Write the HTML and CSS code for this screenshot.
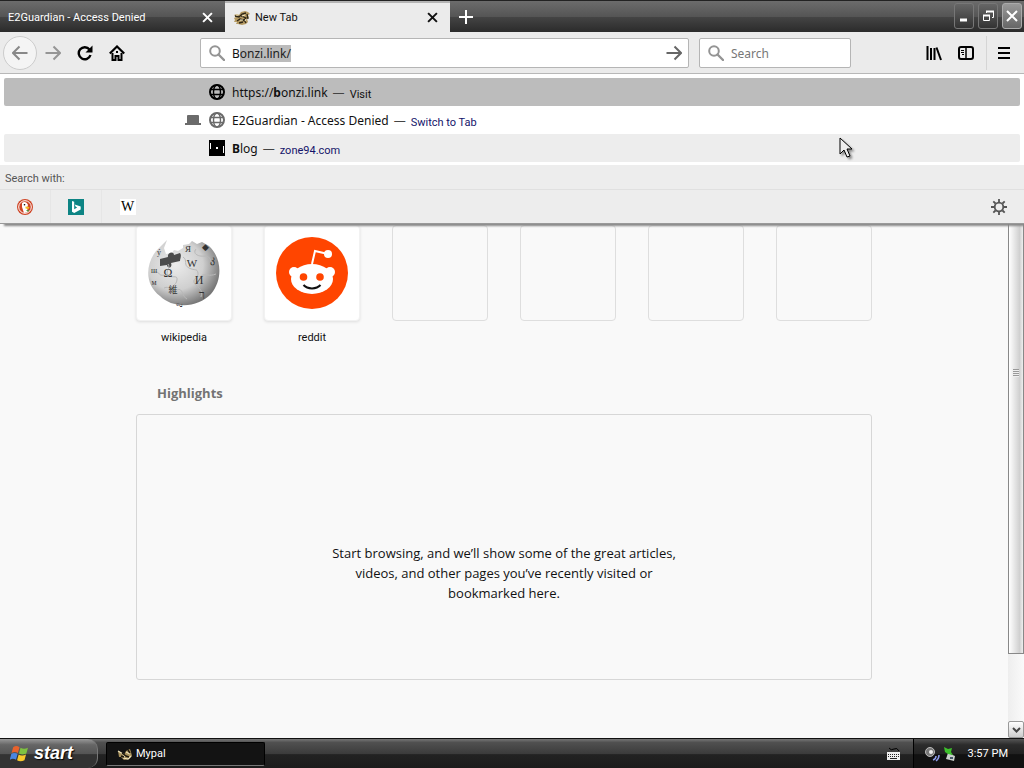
FILE: index.html
```html
<!DOCTYPE html>
<html lang="en">
<head>
    <meta charset="UTF-8">
    <meta name="viewport" content="width=device-width, initial-scale=1.0">
    <title>New Tab</title>
    <link rel="stylesheet" href="styles.css">
</head>
<body>
    <svg class="defs" aria-hidden="true">
        <symbol id="lens" viewBox="0 0 16 16">
            <circle cx="6" cy="6" r="4.8" fill="none" stroke="currentColor" stroke-width="2"/>
            <path d="M9.5 9.5 15 15" stroke="currentColor" stroke-width="2.4" stroke-linecap="round"/>
        </symbol>
        <symbol id="globe" viewBox="0 0 16 16">
            <g fill="none" stroke="currentColor">
                <circle cx="8" cy="8" r="7" stroke-width="2"/>
                <ellipse cx="8" cy="8" rx="3.5" ry="7" stroke-width="1.4"/>
                <path d="M2 5.500h12M2 10.500h12" stroke-width="1.4"/>
            </g>
        </symbol>
        <symbol id="arrow" viewBox="0 0 16 16">
            <path d="M0.500 8h14M8.500 1.500 15 8l-6.500 6.500" fill="none" stroke="currentColor" stroke-width="2"/>
        </symbol>
        <symbol id="cross" viewBox="0 0 10 10">
            <path d="M1 1l8 8M9 1 1 9" stroke="currentColor" stroke-width="1.8"/>
        </symbol>
        <symbol id="dragon" viewBox="0 0 16 14">
            <path d="M0 4l3-1 2 1 2-3 4-1 3 1 2 2-2 1 1 3-2 1 1 3-2 2-4 1-4-1-2 0 1-2-3 0 1-2-1-2 2-1z" fill="#b59a62"/>
            <path d="M1 5l4 1 3-3 4-1M3 10l3-2 4 1 2 3M7 5l5 2-3 3M5 12l4-1M13 3l1 5" fill="none" stroke="#2e2718" stroke-width="1.300"/>
            <path d="M8 5l3-1M6 9l3 0M2 4l2 0M11 10l1-2" stroke="#f3e9c4"/>
        </symbol>
        <symbol id="dragon-small" viewBox="0 0 16 14">
            <path d="M1 4l4 2 2 2 2-4 4-2 1 3 1 4-3 3-5 1-3-3-2 0z" fill="#a8915c"/>
            <path d="M1 4l5 3 2 3M9 5l4 2M6 11l5 1 3-3" fill="none" stroke="#efe3bb" stroke-width="1.200"/>
            <path d="M5 6l4 3 3 1M11 3l2 3M4 9l3 1" fill="none" stroke="#1c170d" stroke-width="1.400"/>
        </symbol>
    </svg>

    <header class="tabbar">
        <div class="tab">
            <span class="tab-title">E2Guardian - Access Denied</span>
            <button class="tab-close" aria-label="Close tab"><svg><use href="#cross"/></svg></button>
        </div>
        <div class="tab active">
            <svg class="tab-icon"><use href="#dragon"/></svg>
            <span class="tab-title">New Tab</span>
            <button class="tab-close" aria-label="Close tab"><svg><use href="#cross"/></svg></button>
        </div>
        <button class="new-tab" aria-label="New tab"><svg viewBox="0 0 14 14"><path d="M7 0v14M0 7h14" stroke="#fff" stroke-width="2"/></svg></button>
        <div class="window-buttons">
            <button aria-label="Minimize"><svg viewBox="0 0 12 12"><path d="M2 10h7" stroke="#fff" stroke-width="3"/></svg></button>
            <button aria-label="Restore"><svg viewBox="0 0 12 12"><path d="M4.500 3V1.500h7v6H10" fill="none" stroke="#fff"/><path d="M4 1.500h8" stroke="#fff" stroke-width="2"/><path d="M1.500 5.500h6v5h-6z" fill="none" stroke="#fff"/><path d="M1 5.500h7" stroke="#fff" stroke-width="2"/></svg></button>
            <button class="close" aria-label="Close"><svg viewBox="0 0 12 12"><path d="M1 1l10 10M11 1 1 11" stroke="#fff" stroke-width="2"/></svg></button>
        </div>
    </header>

    <nav class="toolbar">
        <div class="nav-buttons">
            <button class="back" aria-label="Back"><svg class="flip"><use href="#arrow"/></svg></button>
            <button class="forward" aria-label="Forward"><svg><use href="#arrow"/></svg></button>
            <button aria-label="Reload"><svg viewBox="0 0 16 16"><path d="M12.500 4.500A6 6 0 1 0 13.500 10" fill="none" stroke="#000" stroke-width="2.400"/><path d="M15.500 0.500v7h-7z"/></svg></button>
            <button aria-label="Home"><svg viewBox="0 0 16 16"><path d="M0.800 8.500 8 1.500l7.200 7" fill="none" stroke="#000" stroke-width="2.200"/><path d="M3.500 8v7h3v-4h3v4h3V8" fill="none" stroke="#000" stroke-width="2"/><path d="M7 6h2v2H7z"/></svg></button>
        </div>
        <label class="field url-field">
            <svg class="lens"><use href="#lens"/></svg>
            <input type="text" id="url" value="Bonzi.link/" aria-label="Address" spellcheck="false">
            <button class="go" aria-label="Go"><svg><use href="#arrow"/></svg></button>
        </label>
        <label class="field search-field">
            <svg class="lens"><use href="#lens"/></svg>
            <input type="text" placeholder="Search" aria-label="Search">
        </label>
        <div class="tool-buttons">
            <button aria-label="Library"><svg viewBox="0 0 16 16"><path d="M1.500 1v14M5 3v12M8.500 3v12" stroke="#000" stroke-width="2"/><path d="M10.500 2.500 15 15" stroke="#000" stroke-width="2"/></svg></button>
            <button aria-label="Sidebars"><svg viewBox="0 0 16 16"><rect x="1" y="2" width="14" height="12" rx="2" fill="none" stroke="#000" stroke-width="2"/><path d="M8 2v12" stroke="#000" stroke-width="1.500"/><path d="M3 5.500h3M3 7.500h3M4 9.500h2" stroke="#000"/></svg></button>
            <button class="menu" aria-label="Menu"><svg viewBox="0 0 16 16"><path d="M2 3h12M2 8h12M2 13h12" stroke="#000" stroke-width="2"/></svg></button>
        </div>
    </nav>

    <main class="content">
        <div class="popup">
            <ul class="results">
                <li class="selected">
                    <span class="device"></span>
                    <svg class="icon black"><use href="#globe"/></svg>
                    <span class="result-title">https://<b>b</b>onzi.link</span>
                    <span class="dash">—</span>
                    <span class="action">Visit</span>
                </li>
                <li>
                    <svg class="device" viewBox="0 0 16 16"><path d="M2 4q0-1 1-1h10q1 0 1 1v7H2zM0 11h16v2H0z" fill="#6b6b6b"/></svg>
                    <svg class="icon gray"><use href="#globe"/></svg>
                    <span class="result-title">E2Guardian - Access Denied</span>
                    <span class="dash">—</span>
                    <span class="action link">Switch to Tab</span>
                </li>
                <li class="alt">
                    <span class="device"></span>
                    <svg class="icon" viewBox="0 0 16 16"><path d="M0 0h16v16H0z"/><path d="M1.500 3v6M14.500 6v7" stroke="#fff"/><path d="M7 8h2" stroke="#fff" stroke-width="2"/></svg>
                    <span class="result-title"><b>B</b>log</span>
                    <span class="dash">—</span>
                    <span class="action link">zone94.com</span>
                </li>
            </ul>
            <div class="search-with">Search with:</div>
            <div class="engines">
                <button aria-label="DuckDuckGo"><svg viewBox="0 0 16 16"><circle cx="8" cy="8" r="8" fill="#cf4526"/><circle cx="8" cy="8" r="6.300" fill="none" stroke="#fff"/><path d="M5 4c2-2 5-1 6 2l-1 3 1 4-4 1-2-6z" fill="#fff"/><path d="M8.500 7.500l4 .5-1 2-3-.5z" fill="#f5bb24"/><path d="M9 11l3 0-1 2z" fill="#4a9b3c"/><circle cx="7.500" cy="5.800" r="0.800"/></svg></button>
                <button aria-label="Bing"><svg viewBox="0 0 16 16"><path d="M0 0h16v16H0z" fill="#0d8484"/><path d="M4 2l2.200.8v7.500l3-1.700-1.500-.8-1-2.300 6 2v3L6.200 14 4 12.700z" fill="#fff"/></svg></button>
                <button aria-label="Wikipedia"><span class="wiki-icon">W</span></button>
                <button class="settings" aria-label="Change search settings"><svg viewBox="0 0 16 16"><circle cx="8" cy="8" r="4.300" fill="none" stroke="#555" stroke-width="1.800"/><path d="M8 0v3M8 13v3M0 8h3M13 8h3M2.300 2.300l2.200 2.200M11.500 11.500l2.200 2.200M2.300 13.700l2.200-2.200M11.500 4.500l2.200-2.200" stroke="#555" stroke-width="1.800"/></svg></button>
            </div>
        </div>

        <div class="page">
            <div class="page-inner">
                <div class="top-sites">
                    <a class="site" href="#">
                        <span class="tile filled">
                            <svg viewBox="0 0 72 72">
                                <defs>
                                    <radialGradient id="ball" cx="38%" cy="38%" r="65%">
                                        <stop offset="0" stop-color="#ececec"/>
                                        <stop offset="0.600" stop-color="#cfcfcf"/>
                                        <stop offset="1" stop-color="#777"/>
                                    </radialGradient>
                                </defs>
                                <path d="M8 14 19 3l-3 8 2 6 6-1 2-3 4 1 5-3 0-3 6-1 3-3 5 3 5-2 7 4c13 12 14 34 2 48-13 14-38 15-51 2C-3 48-3 28 8 14z" fill="url(#ball)"/>
                                <path d="M12 22l8-2c-1-5 6-6 6-2l6-2c2 2 0 6 0 8l-9 2c2 5-4 6-4 2l-7 1z" fill="#4c4c4c"/>
                                <path d="M20 27c3 4-3 7 0 11s10-1 9 5-5 4-4 9M35 20c5 3 0 8 6 11s8 0 9 5-7 6-3 11 8 5 6 13M5 35c6-3 5 5 11 3M48 12c-4 5 3 8 9 7s5 8 10 8M16 51c6-3 7 5 13 2s5 7 10 9M53 39c4-3 8 1 15-2" fill="none" stroke="#b8b8b8"/>
                                <g fill="#333" font-family="Liberation Serif, serif" text-anchor="middle">
                                    <text x="20" y="40" font-size="12">Ω</text>
                                    <text x="44" y="30" font-size="11">W</text>
                                    <text x="51" y="47" font-size="12">И</text>
                                    <text x="25" y="56" font-size="9" font-family="Noto Sans CJK JP, sans-serif">維</text>
                                    <text x="54" y="62" font-size="12">ר</text>
                                    <text x="64" y="26" font-size="10">კ</text>
                                    <text x="6" y="36" font-size="8">ш</text>
                                    <text x="6" y="48" font-size="8">м</text>
                                    <text x="40" y="15" font-size="9">Я</text>
                                    <text x="57" y="13" font-size="9">◆</text>
                                    <text x="31" y="69" font-size="7">வு</text>
                                    <text x="11" y="18" font-size="8">ý</text>
                                </g>
                            </svg>
                        </span>
                        <span class="site-name">wikipedia</span>
                    </a>
                    <a class="site" href="#">
                        <span class="tile filled">
                            <svg viewBox="0 0 72 72">
                                <circle cx="36" cy="36" r="36" fill="#ff4500"/>
                                <path d="M36 27l3-13 13 3" fill="none" stroke="#fff" stroke-width="2"/>
                                <g fill="#fff">
                                    <circle cx="52" cy="17" r="4"/>
                                    <circle cx="18" cy="35" r="5"/>
                                    <circle cx="54" cy="35" r="5"/>
                                    <ellipse cx="36" cy="42" rx="21" ry="15"/>
                                </g>
                                <circle cx="27.500" cy="40" r="3.800" fill="#ff4500"/>
                                <circle cx="44" cy="40" r="3.800" fill="#ff4500"/>
                                <path d="M27.500 48c4 4.500 13 4.500 17 0" fill="none" stroke="#111" stroke-width="2"/>
                            </svg>
                        </span>
                        <span class="site-name">reddit</span>
                    </a>
                    <div class="site"><span class="tile"></span></div>
                    <div class="site"><span class="tile"></span></div>
                    <div class="site"><span class="tile"></span></div>
                    <div class="site"><span class="tile"></span></div>
                </div>
                <h3>Highlights</h3>
                <section class="highlights">
                    <p>Start browsing, and we’ll show some of the great articles, videos, and other pages you’ve recently visited or bookmarked here.</p>
                </section>
            </div>
        </div>

        <div class="scrollbar">
            <div class="thumb"><i class="grip"></i></div>
            <div class="track"></div>
            <button aria-label="Scroll down"><svg viewBox="0 0 9 6"><path d="M1 1l3.500 3.500L8 1" fill="none" stroke="#444" stroke-width="2"/></svg></button>
        </div>
    </main>

    <footer class="taskbar">
        <button class="start">
            <svg viewBox="0 0 18 18">
                <path d="M3 3c2-1.500 4-1.500 6 0L7.500 8.500c-2-1.300-4-1.300-6 0z" fill="#e8622c"/>
                <path d="M10 3.500c2 1.200 4.500 1.200 7 0L15.500 9c-2.500 1.200-5 1.200-7 0z" fill="#7fc241"/>
                <path d="M1.200 9.500c2-1.300 4-1.300 6 0L5.700 15c-2-1.300-4-1.300-6 0z" fill="#4a86e0"/>
                <path d="M8.200 10c2 1.200 4.500 1.200 7 0l-1.500 5.500c-2.500 1.200-5 1.200-7 0z" fill="#f8c92c"/>
            </svg>
            start
        </button>
        <button class="task">
            <svg><use href="#dragon-small"/></svg>
            Mypal
        </button>
        <svg class="keyboard" viewBox="0 0 14 14"><path d="M2 1q2 3 5 1t5 2" fill="none" stroke="#000"/><path d="M0 5h13v8H0z" fill="#eee"/><path d="M1 7.500h11M1 9.500h11" stroke="#222" stroke-dasharray="1 1"/><path d="M3 11.500h7" stroke="#222"/></svg>
        <div class="tray">
            <svg viewBox="0 0 16 16"><circle cx="6" cy="6" r="4.500" fill="#777" stroke="#bbb"/><circle cx="7" cy="6" r="2" fill="#eee"/><path d="M9 14q3-1 3-4M12 15q3-2 3-6" fill="none" stroke="#8d9be8" stroke-width="1.500"/></svg>
            <svg viewBox="0 0 16 16"><path d="M6 7l7 3-1 5-8-2z" fill="#c9cfcb"/><path d="M8 11h3v2H8z" fill="#456"/><path d="M2 1l4 2 4-1-1 4 2 3-5-1-3-2z" fill="#3ec02c"/></svg>
            <time>3:57 PM</time>
        </div>
    </footer>

    <svg class="cursor" viewBox="0 0 14 22" aria-hidden="true"><path d="M1 1v16l4-4 3 7 3-1-3-7h5z" fill="#eee" stroke="#000"/></svg>

    <script>
        // Keep the typed letter and select the autocompleted part
        const url = document.getElementById("url");
        url.focus();
        url.setSelectionRange(1, url.value.length);
    </script>
</body>
</html>
```
FILE: styles.css
```css
* {
    box-sizing: border-box;
}
body {
    margin: 0;
    height: 100vh;
    display: flex;
    flex-direction: column;
    overflow: hidden;
    font-family: Roboto, "Noto Sans", sans-serif;
    font-size: 11px;
    color: #111;
    background: #f9f9f9;
}
button {
    display: flex;
    align-items: center;
    justify-content: center;
    margin: 0;
    padding: 0;
    border: none;
    background: none;
    font: inherit;
    color: inherit;
}
svg {
    display: block;
    flex: none;
    width: 16px;
    height: 16px;
}
.defs {
    position: absolute;
    width: 0;
    height: 0;
}

/* Tabs */
.tabbar {
    display: flex;
    height: 32px;
    flex: none;
    border-top: 1px solid #222;
    background: linear-gradient(#6c6c6c, #555 50%, #444 52%, #2b2b2b);
}
.tab {
    display: flex;
    align-items: center;
    width: 225px;
    padding: 2px 12px 0 8px;
    color: #fff;
}
.tab.active {
    padding: 0 12px 0 9px;
    background: #ebebeb;
    border-top: 2px solid #b4b4b4;
    color: #111;
}
.tab-icon {
    margin-right: 5px;
}
.tab-title {
    flex: 1;
}
.tab-close svg {
    width: 11px;
    height: 11px;
}
.new-tab {
    width: 32px;
}
.new-tab svg {
    width: 14px;
    height: 14px;
}
.window-buttons {
    display: flex;
    gap: 4px;
    margin-left: auto;
    padding: 2px 2px 3px 0;
}
.window-buttons button {
    width: 20px;
    border: 1px solid #777;
    border-radius: 3px;
    background: linear-gradient(#666, #333);
}
.window-buttons .close {
    border-color: #aaa;
    background: linear-gradient(#999, #666);
}
.window-buttons svg {
    width: 12px;
    height: 12px;
}

/* Toolbar */
.toolbar {
    display: flex;
    align-items: center;
    height: 42px;
    flex: none;
    padding: 0 3px;
    background: #ebebeb;
    border-bottom: 1px solid #b8b8b8;
}
.nav-buttons {
    display: flex;
    width: 197px;
    align-items: center;
}
.nav-buttons button {
    width: 32px;
    height: 34px;
}
.nav-buttons .back {
    width: 34px;
    border: 1px solid #ccc;
    border-radius: 50%;
    background: #f4f4f4;
    color: #888;
}
.nav-buttons .forward {
    color: #959595;
}
.flip {
    transform: scaleX(-1);
}
.field {
    display: flex;
    align-items: center;
    height: 30px;
    padding: 0 6px 0 8px;
    border: 1px solid #b5b5b5;
    border-radius: 2px;
    background: #fff;
}
.url-field {
    flex: 1;
}
.search-field {
    width: 152px;
    margin-left: 10px;
}
.lens {
    margin-right: 7px;
    color: #949494;
}
.field input {
    flex: 1;
    min-width: 0;
    padding: 2px 0 0;
    border: none;
    outline: none;
    background: none;
    font: 12px "Noto Sans", sans-serif;
    color: #111;
}
.field input::placeholder {
    color: #777;
}
.field input::selection {
    background: #bbb;
    color: #222;
}
.go {
    color: #666;
}
.tool-buttons {
    display: flex;
    margin-left: 67px;
}
.tool-buttons button {
    width: 32px;
    height: 34px;
}
.tool-buttons .menu {
    margin-left: 4px;
    width: 35px;
    border-left: 1px solid #d5d5d5;
}

/* Address bar popup */
.content {
    position: relative;
    display: flex;
    flex: 1;
    min-height: 0;
}
.popup {
    position: absolute;
    top: 0;
    left: 0;
    right: 0;
    z-index: 1;
    background: #fff;
    border-bottom: 1px solid #999;
    box-shadow: 4px 2px 2px #888;
}
.results {
    margin: 0;
    padding: 4px 4px 3px;
    list-style: none;
}
.results li {
    display: flex;
    align-items: center;
    height: 28px;
    padding-left: 181px;
    border-radius: 2px;
}
.result-title,
.dash {
    font: 12px "Noto Sans", sans-serif;
}
.results .selected {
    background: #bcbcbc;
}
.results .alt {
    background: #ededed;
}
.device {
    width: 16px;
    margin-right: 8px;
}
.icon {
    margin-right: 7px;
}
.black {
    color: #000;
}
.gray {
    color: #6b6b6b;
}
.dash {
    margin: 0 5px;
    color: #444;
}
.action {
    padding-top: 4px;
}
.link {
    color: #14146a;
}
.search-with {
    height: 25px;
    padding: 0 5px;
    line-height: 28px;
    background: #ededed;
    border-bottom: 1px solid #e0e0e0;
    color: #555;
}
.engines {
    display: flex;
    height: 33px;
    background: #ededed;
}
.engines button {
    width: 51px;
    border-right: 1px solid #e6e6e6;
}
.engines button:nth-child(3) {
    border-right: none;
}
.engines .settings {
    margin-left: auto;
    border: none;
}
.wiki-icon {
    width: 16px;
    background: #fff;
    font: 14px/16px "Liberation Serif", serif;
    color: #000;
}

/* New tab page */
.page {
    flex: 1;
    padding-top: 151px;
}
.page-inner {
    max-width: 736px;
    margin: 0 auto;
}
.top-sites {
    display: grid;
    grid-template-columns: repeat(6, 96px);
    justify-content: space-between;
}
.site {
    color: #111;
    text-align: center;
    text-decoration: none;
}
.tile {
    display: flex;
    align-items: center;
    justify-content: center;
    height: 96px;
    border: 1px solid #dedede;
    border-radius: 4px;
}
.tile.filled {
    border-color: #f2f2f2;
    background: #fff;
    box-shadow: 0 1px 3px #ddd;
}
.tile svg {
    width: 72px;
    height: 72px;
}
.site-name {
    display: block;
    line-height: 34px;
}
h3 {
    margin: 29px 21px 12px;
    font: bold 13px/18px "Open Sans", sans-serif;
    color: #737373;
}
.highlights {
    display: flex;
    justify-content: center;
    height: 266px;
    padding-top: 128px;
    border: 1px solid #d7d7d7;
    border-radius: 3px;
}
.highlights p {
    width: 350px;
    margin: 0;
    font: 13px/20px "Open Sans", sans-serif;
    text-align: center;
}

/* Scrollbar */
.scrollbar {
    display: flex;
    flex-direction: column;
    width: 16px;
    background: linear-gradient(90deg, #eee, #fafafa);
}
.thumb {
    display: flex;
    justify-content: center;
    align-items: center;
    flex: 1;
    padding-top: 18px;
    border: 1px solid #888;
    background: linear-gradient(90deg, #fff, #d0d0d0 75%, #eee);
}
.grip {
    width: 6px;
    height: 8px;
    background: repeating-linear-gradient(#999 0 1px, #eee 1px 2px);
}
.track {
    height: 67px;
}
.scrollbar button {
    height: 17px;
    border: 1px solid #999;
    border-radius: 2px;
    background: linear-gradient(#fff, #ccc);
}
.scrollbar svg {
    width: 9px;
    height: 6px;
}

/* Taskbar */
.taskbar {
    display: flex;
    align-items: center;
    height: 30px;
    flex: none;
    border-top: 1px solid #111;
    background: linear-gradient(#777, #505050 12%, #3c3c3c 50%, #222 54%, #1c1c1c);
    color: #fff;
}
.start {
    gap: 5px;
    width: 98px;
    height: 100%;
    padding-right: 14px;
    border-right: 1px solid #777;
    border-radius: 0 10px 10px 0;
    background: linear-gradient(#999, #666 20%, #555 50%, #333 54%, #333);
    font: italic bold 18px "Liberation Sans", sans-serif;
    text-shadow: 1px 1px 1px #000;
}
.start svg {
    width: 19px;
    height: 19px;
}
.task {
    justify-content: flex-start;
    gap: 3px;
    width: 159px;
    height: 24px;
    margin-left: 8px;
    padding-left: 10px;
    border: 1px solid #000;
    border-bottom-color: #777;
    border-radius: 2px;
    background: #131313;
}
.keyboard {
    width: 14px;
    height: 14px;
    margin-left: auto;
}
.tray {
    display: flex;
    align-items: center;
    gap: 2px;
    height: 100%;
    margin-left: 12px;
    padding: 0 16px 0 10px;
    border-left: 1px solid #000;
    background: linear-gradient(#555, #2c2c2c 20%, #222 50%, #111 54%, #111);
}
.tray time {
    margin-left: 8px;
}

/* Mouse pointer over the popup */
.cursor {
    position: absolute;
    z-index: 2;
    top: 137px;
    left: 839px;
    width: 14px;
    height: 22px;
    filter: drop-shadow(2px 2px 1px #888);
}
```
